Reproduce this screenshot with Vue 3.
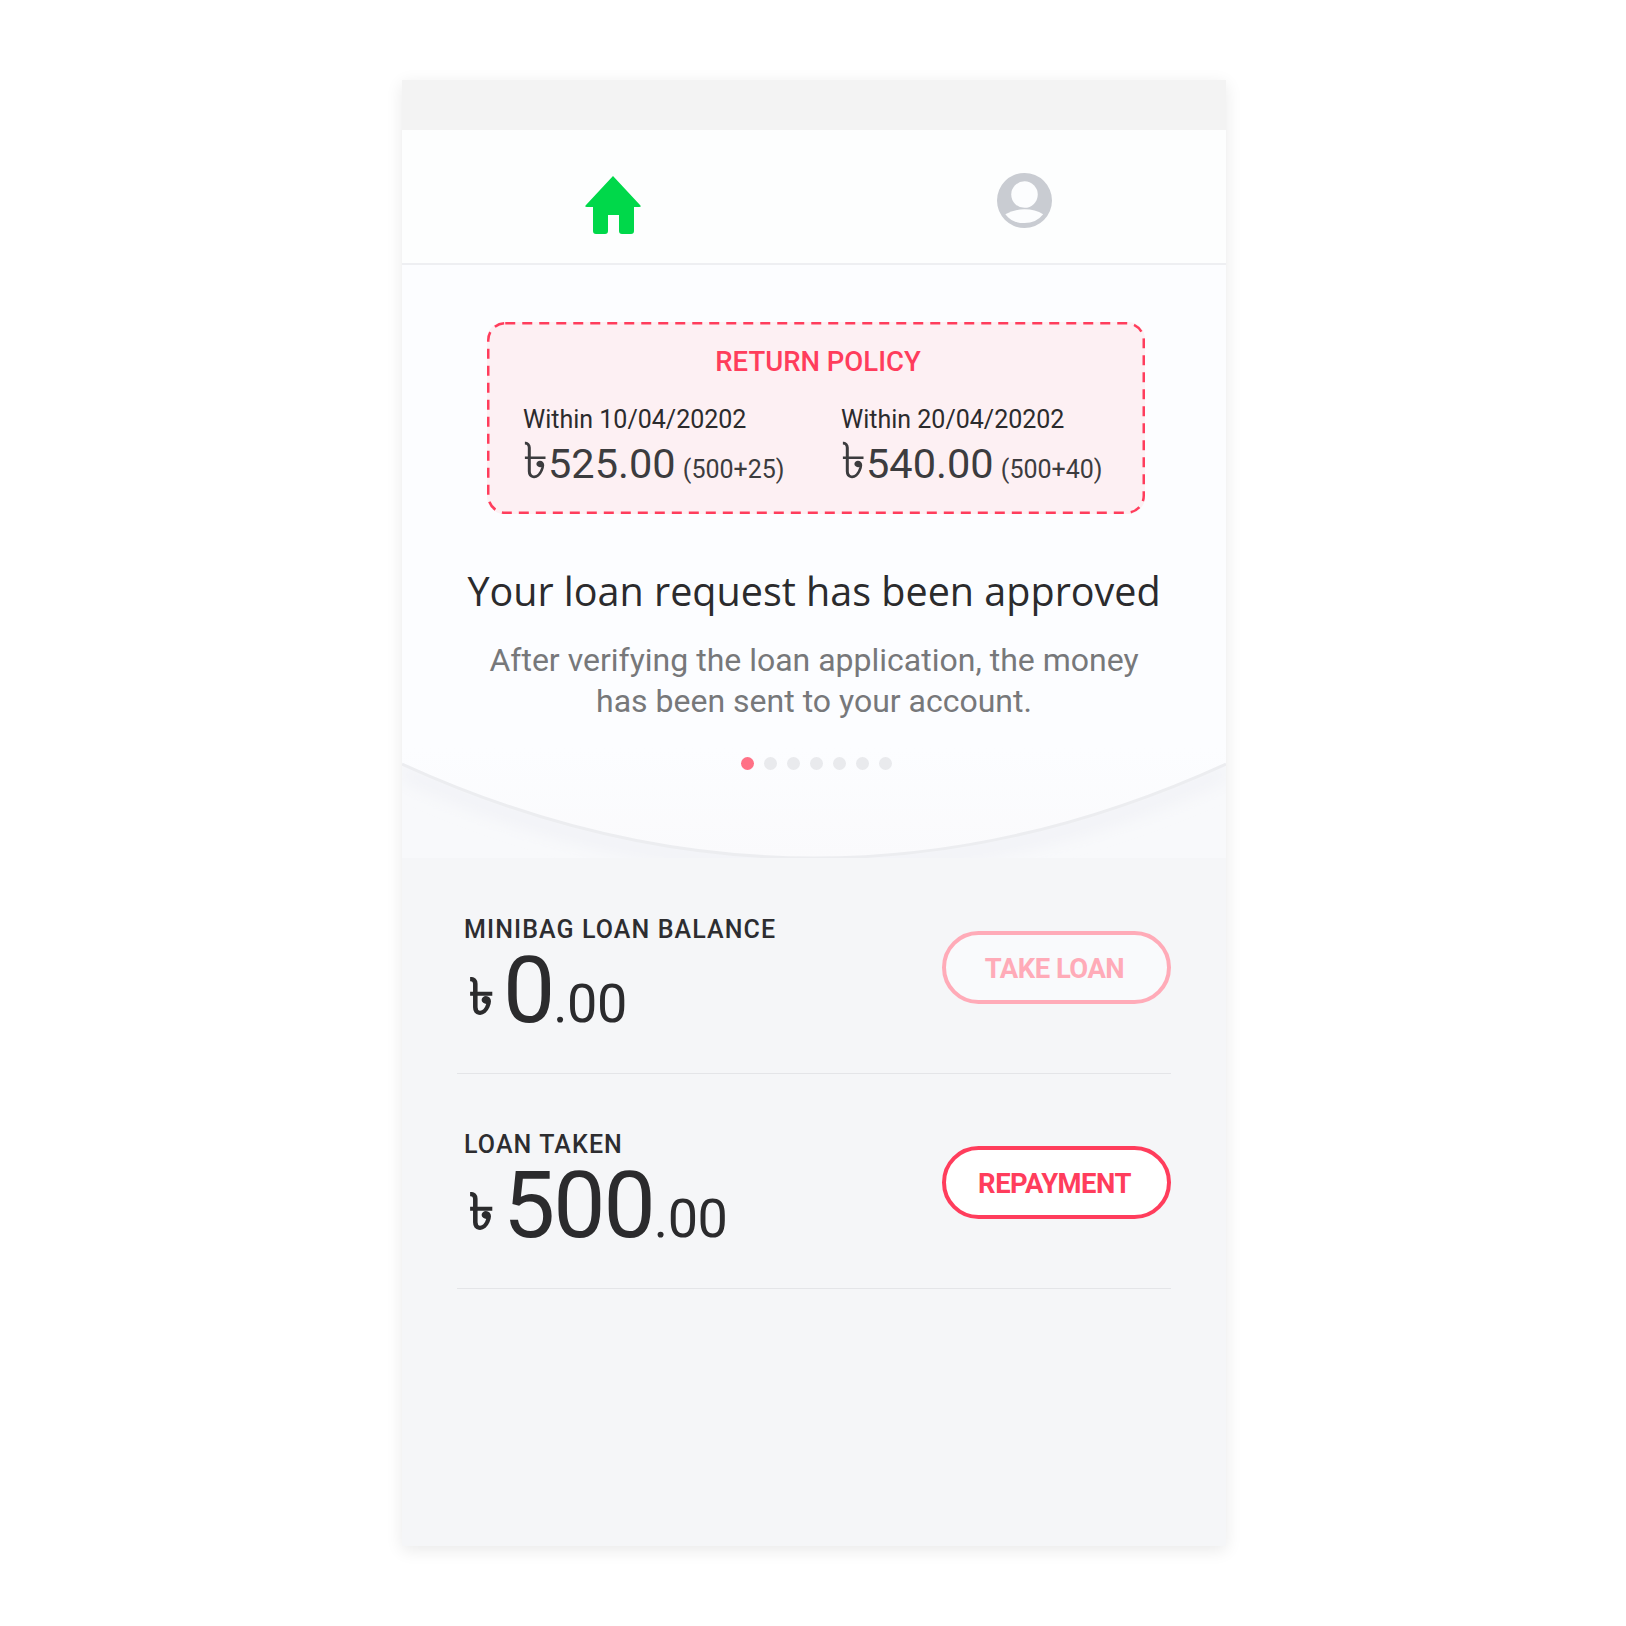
<template>
  <div class="page">
    <div class="phone">
      <div class="status-bar"></div>

      <nav class="tabs">
        <div class="tab tab-home">
          <svg width="56" height="58" viewBox="0 0 56 58">
            <path
              fill="#00d84a"
              d="M28 0 L55 29 Q57 31 54 31 L49 31 L49 55 Q49 58 46 58 L37 58 Q34 58 34 55 L34 39 L23 39 L23 55 Q23 58 20 58 L11 58 Q8 58 8 55 L8 31 L2 31 Q-1 31 1 29 Z"
            />
          </svg>
        </div>
        <div class="tab tab-user">
          <svg width="55" height="55" viewBox="0 0 56 56">
            <circle cx="28" cy="28" r="28" fill="#c9ccd2" />
            <circle cx="28" cy="22" r="13.5" fill="#fcfdfe" />
            <path fill="#fcfdfe" d="M8.5 42 Q17 37 28 37 Q39 37 47 42 Q40 51 28 51 Q15 51 8.5 42 Z" />
          </svg>
        </div>
      </nav>

      <section class="hero">
        <svg class="curve" width="824" height="110" viewBox="0 0 824 110">
          <defs>
            <linearGradient id="inner" x1="0" y1="0" x2="0" y2="1">
              <stop offset="0" stop-color="#fcfdff" />
              <stop offset="1" stop-color="#fafafc" />
            </linearGradient>
            <filter id="soft" x="-5%" y="-40%" width="110%" height="180%">
              <feGaussianBlur stdDeviation="9" />
            </filter>
          </defs>
          <rect width="824" height="110" fill="#f8f9fb" />
          <path d="M0 16 Q412 204 824 16 L824 30 Q412 218 0 30 Z" fill="#eff0f5" filter="url(#soft)" />
          <path d="M0 16 Q412 204 824 16 L824 0 L0 0 Z" fill="url(#inner)" />
          <path d="M0 16 Q412 204 824 16" fill="none" stroke="#ecedf0" stroke-width="3" />
        </svg>

        <div class="policy">
          <svg class="policy-border" width="658" height="192" viewBox="0 0 658 192">
            <rect
              x="1.25"
              y="1.25"
              width="655.5"
              height="189.5"
              rx="17"
              fill="none"
              stroke="#ff3d5c"
              stroke-width="2.5"
              stroke-dasharray="10 7"
            />
          </svg>
          <div class="policy-title">RETURN POLICY</div>
          <div class="policy-cols">
            <div v-for="item in policies" :key="item.date" class="policy-col">
              <div class="policy-date">Within {{ item.date }}</div>
              <div class="policy-amount">
                <span class="policy-taka">৳</span>{{ item.amount }} <small>{{ item.note }}</small>
              </div>
            </div>
          </div>
        </div>

        <h1 class="headline">Your loan request has been approved</h1>
        <p class="subtext">
          After verifying the loan application, the money<br />has been sent to your account.
        </p>

        <div class="dots">
          <span v-for="n in 7" :key="n" class="dot" :class="{ active: n === 1 }"></span>
        </div>
      </section>

      <section class="balances">
        <div v-for="row in rows" :key="row.label" class="row">
          <div class="row-info">
            <div class="row-label">{{ row.label }}</div>
            <div class="row-amount">
              <span class="currency">৳</span><span class="whole">{{ row.whole }}</span><span class="cents">.00</span>
            </div>
          </div>
          <button class="action" :class="{ muted: row.muted }">{{ row.action }}</button>
        </div>
      </section>
    </div>
  </div>
</template>

<script setup>
const policies = [
  { date: "10/04/20202", amount: "525.00", note: "(500+25)" },
  { date: "20/04/20202", amount: "540.00", note: "(500+40)" },
];

const rows = [
  { label: "MINIBAG LOAN BALANCE", whole: "0", action: "TAKE LOAN", muted: true },
  { label: "LOAN TAKEN", whole: "500", action: "REPAYMENT", muted: false },
];
</script>

<style>
html,
body {
  background: #fff;
}
</style>

<style scoped>
.page {
  height: 1626px;
  padding-top: 80px;
  box-sizing: border-box;
  font-family: Roboto, "Noto Sans", sans-serif;
  color: #2b2b2d;
}

.phone {
  width: 824px;
  height: 1466px;
  margin-left: 402px;
  background: #f5f6f8;
  box-shadow: 0 4px 16px rgba(0, 0, 0, 0.09);
}

.status-bar {
  height: 50px;
  background: #f3f3f3;
}

.tabs {
  display: grid;
  grid-template-columns: 1fr 1fr;
  height: 133px;
  background: #fdfefe;
  border-bottom: 2px solid #eeeff2;
}

.tab {
  display: flex;
  justify-content: center;
}

.tab-home {
  padding-top: 46px;
  padding-left: 10px;
}

.tab-user {
  padding-top: 43px;
  padding-left: 9px;
}

.hero {
  position: relative;
  height: 593px;
  padding-top: 57px;
  box-sizing: border-box;
  background: #fcfdff;
  text-align: center;
}

.curve {
  position: absolute;
  left: 0;
  bottom: 0;
}

.policy {
  position: relative;
  width: 658px;
  height: 192px;
  margin-left: 85px;
  background: #fdf0f3;
  border-radius: 17px;
  text-align: left;
}

.policy-border {
  position: absolute;
  inset: 0;
}

.policy-title {
  padding-top: 24px;
  padding-left: 4px;
  text-align: center;
  font-size: 27.5px;
  line-height: 32px;
  font-weight: 500;
  color: #ff3d5c;
}

.policy-cols {
  display: grid;
  grid-template-columns: 318px 1fr;
  padding: 27px 0 0 36px;
}

.policy-date {
  font-size: 25px;
  line-height: 30px;
  color: #2b2b2d;
}

.policy-amount {
  margin-top: 4px;
  height: 50px;
  font-size: 41.5px;
  line-height: 50px;
  color: #3c3c3e;
  white-space: nowrap;
}

.policy-taka {
  font-size: 50px;
  line-height: 0;
}

.policy-amount small {
  font-size: 25px;
  margin-left: -3px;
}

.headline {
  margin: 51px 0 0;
  position: relative;
  font-family: "Open Sans", sans-serif;
  font-size: 39.5px;
  line-height: 52px;
  font-weight: 400;
  color: #2b2b2d;
}

.subtext {
  position: relative;
  margin: 23px 0 0;
  font-size: 32px;
  line-height: 41px;
  color: #77787a;
}

.dots {
  position: relative;
  display: flex;
  justify-content: center;
  gap: 10px;
  margin-top: 35px;
  padding-left: 5px;
}

.dot {
  width: 13px;
  height: 13px;
  border-radius: 50%;
  background: #e9eaed;
}

.dot.active {
  background: #ff7186;
}

.balances {
  padding: 1px 55px 0;
}

.row {
  display: flex;
  justify-content: space-between;
  height: 215px;
  box-sizing: border-box;
  border-bottom: 1px solid #e4e5e8;
}

.row-info {
  padding: 56px 0 0 7px;
}

.row-label {
  font-size: 25px;
  line-height: 30px;
  font-weight: 500;
  letter-spacing: 1.1px;
  color: #2d2d30;
}

.row-amount {
  margin-top: 6px;
  height: 80px;
  line-height: 80px;
  white-space: nowrap;
  color: #2b2b2d;
}

.currency {
  display: inline-block;
  width: 39px;
  padding-left: 5px;
  box-sizing: border-box;
  font-size: 50px;
  font-weight: 600;
  line-height: 50px;
  vertical-align: 8px;
}

.whole {
  font-size: 93px;
  letter-spacing: -2px;
}

.cents {
  font-size: 54px;
  letter-spacing: -0.4px;
}

.action {
  width: 229px;
  height: 73px;
  margin-top: 72px;
  padding: 3px 4px 0 0;
  border: 4px solid #ff3d5c;
  border-radius: 37px;
  background: #fff;
  font-family: Roboto, sans-serif;
  font-size: 27.4px;
  font-weight: 700;
  letter-spacing: -0.5px;
  color: #ff3d5c;
}

.action.muted {
  background: #f9fafc;
  border-color: #ffabb8;
  color: #ffabb8;
}
</style>
